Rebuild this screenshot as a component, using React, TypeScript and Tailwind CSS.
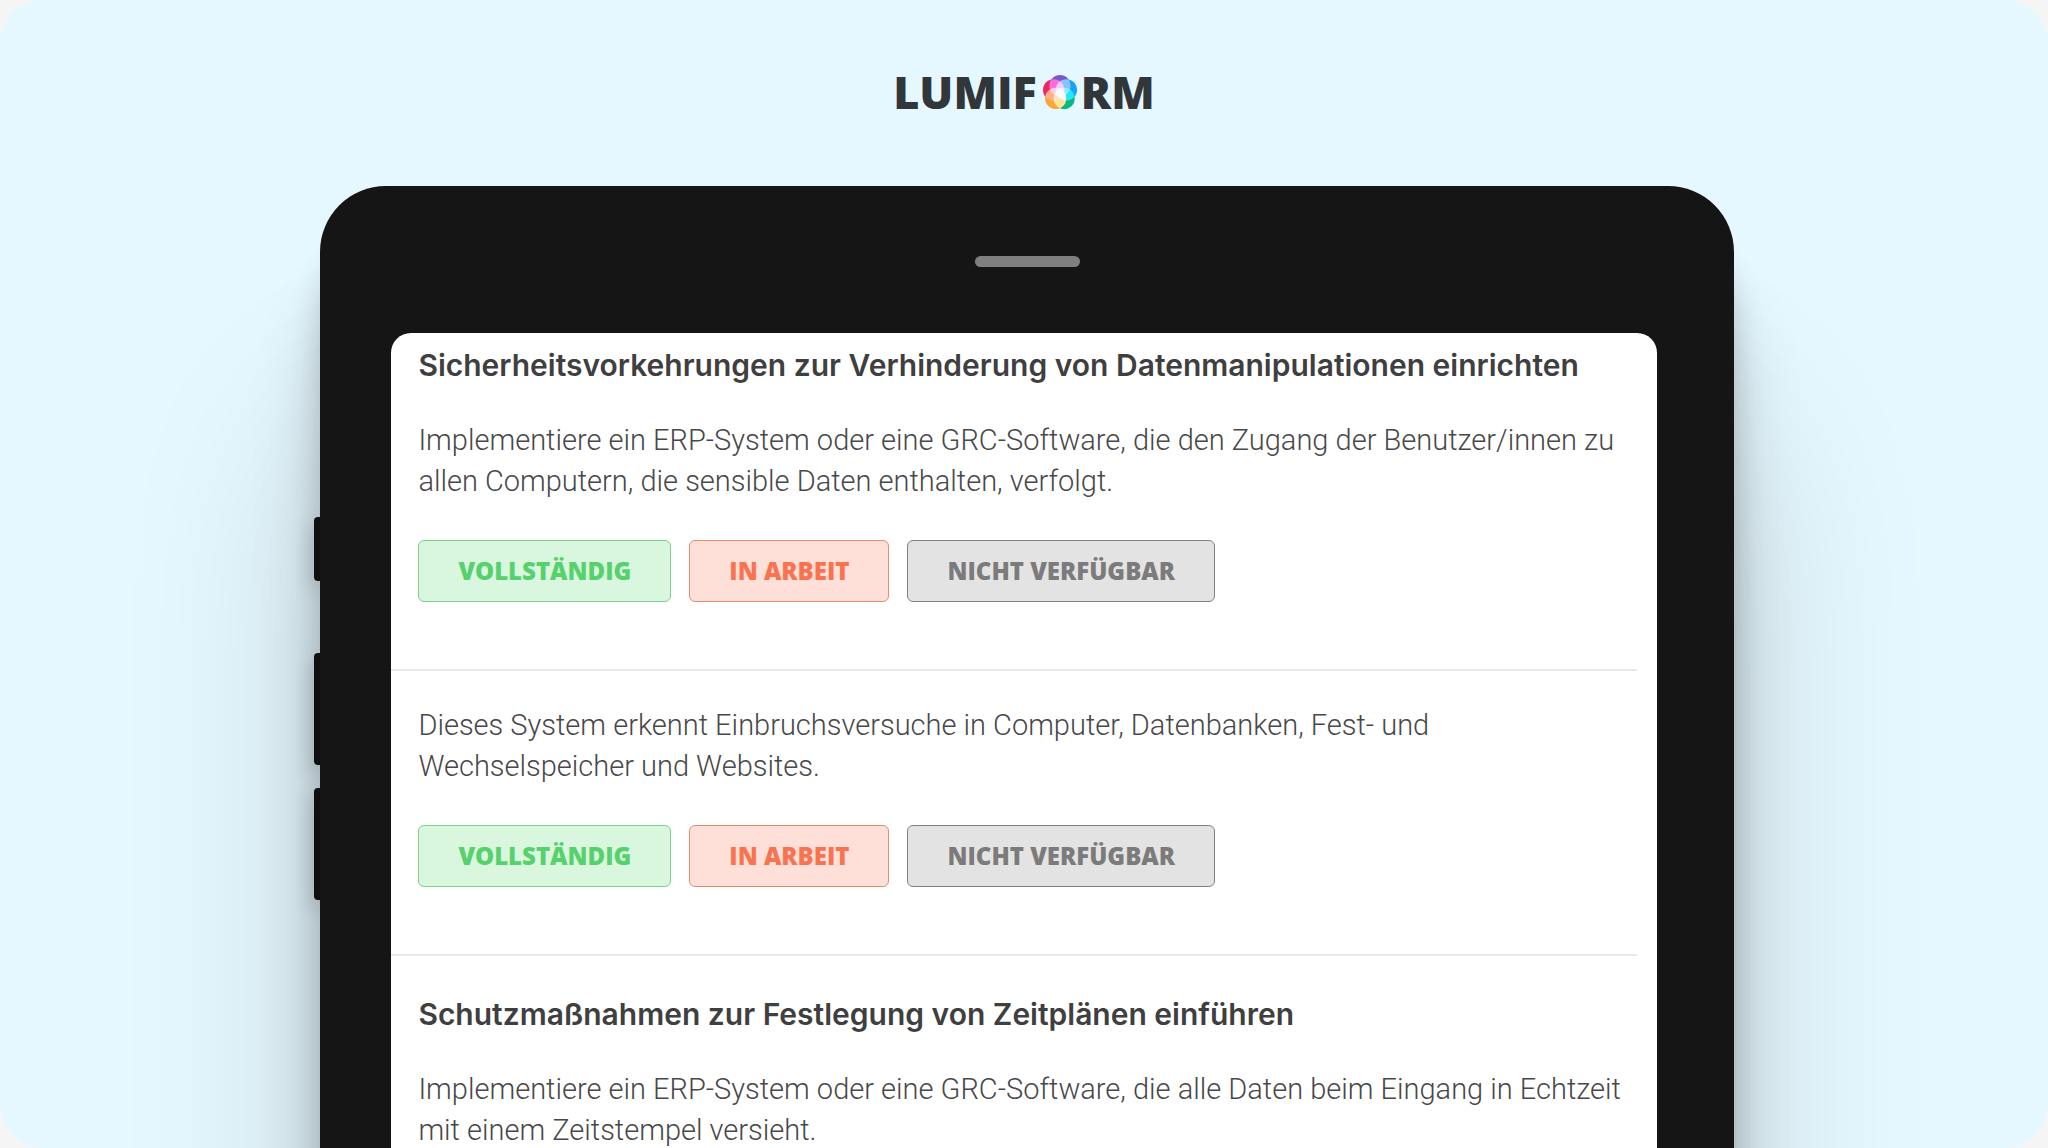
import React from "react";

type StatusTone = "complete" | "progress" | "unavailable";

interface IStatus {
	label: string;
	tone: StatusTone;
}

interface IChecklistItem {
	id: number;
	title?: string;
	text: string;
}

const toneClasses: Record<StatusTone, string> = {
	complete: "border-[#7cd08a] bg-[#d9f6df] text-[#56d16c]",
	progress: "border-[#e98b70] bg-[#ffe0d8] text-[#f97350]",
	unavailable: "border-[#808080] bg-[#e3e3e3] text-[#7b7b7b]",
};

const statuses: IStatus[] = [
	{ label: "VOLLSTÄNDIG", tone: "complete" },
	{ label: "IN ARBEIT", tone: "progress" },
	{ label: "NICHT VERFÜGBAR", tone: "unavailable" },
];

const items: IChecklistItem[] = [
	{
		id: 1,
		title: "Sicherheitsvorkehrungen zur Verhinderung von Datenmanipulationen einrichten",
		text: "Implementiere ein ERP-System oder eine GRC-Software, die den Zugang der Benutzer/innen zu allen Computern, die sensible Daten enthalten, verfolgt.",
	},
	{
		id: 2,
		text: "Dieses System erkennt Einbruchsversuche in Computer, Datenbanken, Fest- und Wechselspeicher und Websites.",
	},
	{
		id: 3,
		title: "Schutzmaßnahmen zur Festlegung von Zeitplänen einführen",
		text: "Implementiere ein ERP-System oder eine GRC-Software, die alle Daten beim Eingang in Echtzeit mit einem Zeitstempel versieht.",
	},
];

const petals = [
	{ cx: 16, cy: 10, color: "#7b57c8" },
	{ cx: 22, cy: 14, color: "#16a4f5" },
	{ cx: 20, cy: 22, color: "#0fb67e" },
	{ cx: 12, cy: 22, color: "#fba53a" },
	{ cx: 10, cy: 14, color: "#f0245f" },
];

const Logo = () => {
	return (
		<div className="flex items-center font-['Open_Sans',sans-serif] text-[45px] leading-[48px] font-extrabold text-[#31363a]">
			<span>LUMIF</span>
			<svg viewBox="0 0 32 32" className="h-[34px] w-[34px] ml-1.5 mr-1 isolate" aria-hidden="true">
				{petals.map((petal) => (
					<circle key={petal.color} cx={petal.cx} cy={petal.cy} r="10" fill={petal.color} className="mix-blend-screen" />
				))}
			</svg>
			<span>RM</span>
		</div>
	);
};

const StatusButton = ({ label, tone }: IStatus) => {
	return (
		<button type="button" className={`h-[62px] px-[39px] rounded-md border font-['Open_Sans',sans-serif] text-[24px] leading-[30px] font-extrabold ${toneClasses[tone]}`}>
			{label}
		</button>
	);
};

const ChecklistItem = ({ title, text }: IChecklistItem) => {
	return (
		<li className="mr-5 pl-[27px] pt-[34px] pb-[67px] border-b-2 border-[#e9e9e9] first:pt-2">
			{title && <h2 className="mt-1 mb-[35px] font-['Inter',sans-serif] text-[30px] leading-[40px] font-semibold text-[#3f3f41]">{title}</h2>}
			<p className="text-[29px] leading-[41px] font-light text-[#48484a]">{text}</p>
			<div className="mt-[38px] flex gap-[18px]">
				{statuses.map((status) => (
					<StatusButton key={status.tone} {...status} />
				))}
			</div>
		</li>
	);
};

const App = () => {
	return (
		<div className="h-screen bg-[#f5f5f5]">
			<main className="h-full flex flex-col overflow-hidden rounded-[44px] bg-[#e6f8ff]">
				<header className="h-[186px] shrink-0 pt-[68px] flex justify-center items-start">
					<Logo />
				</header>
				{/* tablet */}
				<div className="w-[69.3%] mx-auto flex-1 min-h-0 flex">
					{/* side keys */}
					<div className="w-[6px] pt-[331px] flex flex-col">
						<div className="h-16 mb-[72px] rounded-l-sm bg-[#151515] shadow-[0_8px_20px_rgba(0,0,0,0.3)]" />
						<div className="h-28 mb-[23px] rounded-l-sm bg-[#151515] shadow-[0_8px_20px_rgba(0,0,0,0.3)]" />
						<div className="h-28 rounded-l-sm bg-[#151515] shadow-[0_8px_20px_rgba(0,0,0,0.3)]" />
					</div>
					<div className="flex-1 min-w-0 flex flex-col rounded-t-[66px] bg-[#151515] pl-[71px] pr-[77px] shadow-[0_240px_200px_rgba(0,0,0,0.16),0_110px_70px_rgba(0,0,0,0.16),0_60px_30px_rgba(0,0,0,0.16)]">
						<div className="h-[147px] shrink-0 pt-[70px] pl-1.5">
							<div className="w-[105px] h-[11px] mx-auto rounded-full bg-[#7f7f7f]" />
						</div>
						<ul className="flex-1 min-h-0 overflow-hidden rounded-t-[20px] bg-white font-['Roboto',sans-serif]">
							{items.map((item) => (
								<ChecklistItem key={item.id} {...item} />
							))}
						</ul>
					</div>
				</div>
			</main>
		</div>
	);
};

export default App;
